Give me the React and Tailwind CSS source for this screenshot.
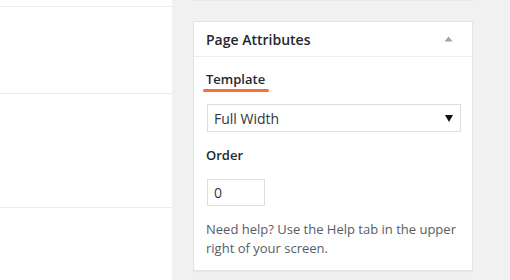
export default function App() {
  return (
    <div className="flex h-[280px] w-[510px] overflow-hidden bg-[#f1f1f1] font-['Open_Sans',sans-serif]">
      <div className="w-[172px] shrink-0 bg-white">
        <div className="h-[7px] border-b border-[#eaeaea]" />
        <div className="h-[87px] border-b border-[#eaeaea]" />
        <div className="h-[114px] border-b border-[#eaeaea]" />
      </div>
      <div className="ml-[21px] w-[280px] shrink-0">
        <div className="h-px border-b border-[#e8e8e8] bg-white" />
        <section className="mt-[20px] border border-[#e5e5e5] bg-white shadow-[0_1px_1px_rgba(0,0,0,0.04)]">
          <div className="flex h-[35px] items-center justify-between border-b border-[#eeeeee] px-3">
            <h2 className="text-[14px] font-semibold text-[#23282d]">Page Attributes</h2>
            <svg width="9" height="6" viewBox="0 0 9 6" className="mr-[7px]">
              <path d="M4.5 0.5 L8.5 5.5 L0.5 5.5 Z" fill="#a0a5aa" />
            </svg>
          </div>
          <div className="px-3 pb-[12px] pt-[13px]">
            <p className="text-[13px] font-semibold leading-[18px] text-[#23282d]">Template</p>
            <div className="ml-[-3px] mt-[1px] h-[3px] w-[66px] rounded-full bg-[#f5703e]" />
            <div className="ml-[1px] mt-[12px] flex h-[28px] w-[254px] items-center justify-between border border-[#dddddd] pl-[6px] pr-[7px]">
              <span className="text-[14px] text-[#32373c]">Full Width</span>
              <svg width="8" height="7" viewBox="0 0 8 7">
                <path d="M0 0 L8 0 L4 7 Z" fill="#111111" />
              </svg>
            </div>
            <p className="mt-[14px] text-[13px] font-semibold leading-[18px] text-[#23282d]">Order</p>
            <div className="ml-[1px] mt-[15px] flex h-[27px] w-[58px] items-center border border-[#dddddd] pl-[6px]">
              <span className="text-[14px] text-[#32373c]">0</span>
            </div>
            <p className="mt-[14px] text-[13px] leading-[19px] text-[#555d66]">
              Need help? Use the Help tab in the upper right of your screen.
            </p>
          </div>
        </section>
      </div>
    </div>
  )
}
